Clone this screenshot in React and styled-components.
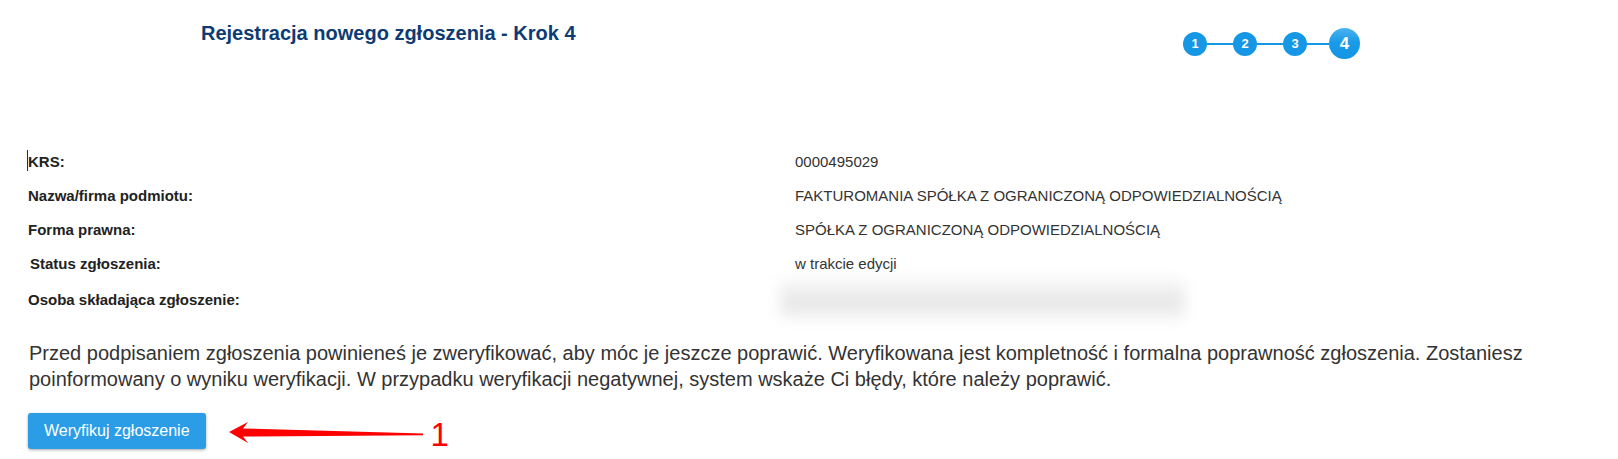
import React from 'react';
import styled, { createGlobalStyle } from 'styled-components';

const GlobalStyle = createGlobalStyle`
  html, body {
    margin: 0;
    padding: 0;
    background: #ffffff;
  }
  body {
    font-family: 'Liberation Sans', Arial, sans-serif;
    color: #333333;
  }
`;

// Layout
const Page = styled.div`
  width: 1618px;
  height: 459px;
  padding-left: 28px;
  box-sizing: border-box;
  overflow: hidden;
`;

const Header = styled.header`
  display: flex;
  align-items: flex-start;
  height: 144px;
`;

const TitleCol = styled.div`
  width: 1155px;
  padding: 21px 0 0 173px;
  box-sizing: border-box;
`;

const Title = styled.h1`
  margin: 0;
  font-size: 20px;
  line-height: 24px;
  font-weight: 700;
  color: #0d3b73;
`;

// Stepper
const Stepper = styled.div`
  display: flex;
  align-items: center;
  margin-top: 28px;
`;

const Step = styled.div`
  width: ${p => (p.active ? 31 : 24)}px;
  height: ${p => (p.active ? 31 : 24)}px;
  border-radius: 50%;
  display: flex;
  align-items: center;
  justify-content: center;
  flex-shrink: 0;
  background: ${p => (p.active
    ? 'linear-gradient(to bottom, #4cb2ef 0%, #1a9be8 45%, #1395e4 100%)'
    : '#1597e5')};
  color: #ffffff;
  font-weight: 700;
  font-size: ${p => (p.active ? 17 : 13)}px;
`;

const Connector = styled.div`
  width: ${p => p.w}px;
  height: 2px;
  background: #1597e5;
`;

// Details
const Details = styled.section`
  display: flex;
  flex-direction: column;
`;

const Row = styled.div`
  display: grid;
  grid-template-columns: 767px 1fr;
  align-items: center;
  height: 34px;
  font-size: 15px;
`;

const Label = styled.div`
  position: relative;
  font-weight: 700;
  color: #222222;
  padding-left: ${p => p.shift || 0}px;
`;

const Caret = styled.span`
  position: absolute;
  left: -1px;
  top: -3px;
  width: 1px;
  height: 21px;
  background: #3a2a10;
`;

const Value = styled.div`
  color: #333333;
`;

const Blurred = styled.div`
  width: 405px;
  height: 39px;
  margin-left: -15px;
  background: linear-gradient(to bottom, #f6f6f6 0%, #ebebeb 45%, #e6e6e6 55%, #f4f4f4 100%);
  filter: blur(7px);
`;

const Note = styled.p`
  margin: 26px 0 0 1px;
  width: 1575px;
  font-size: 20px;
  line-height: 26px;
  color: #333333;
`;

// Actions
const Actions = styled.div`
  display: flex;
  align-items: center;
  margin-top: 18px;
`;

const Button = styled.button`
  height: 36px;
  padding: 0 16px;
  border: none;
  border-radius: 3px;
  background: #2b9de6;
  color: #ffffff;
  font-family: 'Liberation Sans', Arial, sans-serif;
  font-size: 16px;
  box-shadow: 0 1px 3px rgba(0, 0, 0, 0.35);
  cursor: pointer;
`;

const Arrow = styled.svg`
  margin-left: 23px;
  margin-top: 5px;
  flex-shrink: 0;
`;

const Marker = styled.span`
  margin-left: 7px;
  margin-top: 8px;
  font-size: 33px;
  line-height: 33px;
  color: #ff0000;
`;

const rows = [
  { label: 'KRS:', value: '0000495029', caret: true },
  { label: 'Nazwa/firma podmiotu:', value: 'FAKTUROMANIA SPÓŁKA Z OGRANICZONĄ ODPOWIEDZIALNOŚCIĄ' },
  { label: 'Forma prawna:', value: 'SPÓŁKA Z OGRANICZONĄ ODPOWIEDZIALNOŚCIĄ' },
  { label: 'Status zgłoszenia:', value: 'w trakcie edycji', shift: 2 },
  { label: 'Osoba składająca zgłoszenie:', value: null },
];

const App = () => (
  <>
    <GlobalStyle />
    <Page>
      <Header>
        <TitleCol>
          <Title>Rejestracja nowego zgłoszenia - Krok 4</Title>
        </TitleCol>
        <Stepper>
          <Step>1</Step>
          <Connector w={26} />
          <Step>2</Step>
          <Connector w={26} />
          <Step>3</Step>
          <Connector w={22} />
          <Step active>4</Step>
        </Stepper>
      </Header>

      <Details>
        {rows.map(r => (
          <Row key={r.label}>
            <Label shift={r.shift}>
              {r.caret && <Caret />}
              {r.label}
            </Label>
            {r.value ? <Value>{r.value}</Value> : <Blurred />}
          </Row>
        ))}
      </Details>

      <Note>
        Przed podpisaniem zgłoszenia powinieneś je zweryfikować, aby móc je jeszcze poprawić. Weryfikowana jest kompletność i formalna poprawność zgłoszenia. Zostaniesz poinformowany o wyniku weryfikacji. W przypadku weryfikacji negatywnej, system wskaże Ci błędy, które należy poprawić.
      </Note>

      <Actions>
        <Button>Weryfikuj zgłoszenie</Button>
        <Arrow width="195" height="28" viewBox="0 0 195 28">
          <path d="M0,13 L19,3 L14,9.5 L194,14.6 L194,16.2 L14,17.5 L19,24 Z" fill="#ff0000" />
        </Arrow>
        <Marker>1</Marker>
      </Actions>
    </Page>
  </>
);

export default App;
